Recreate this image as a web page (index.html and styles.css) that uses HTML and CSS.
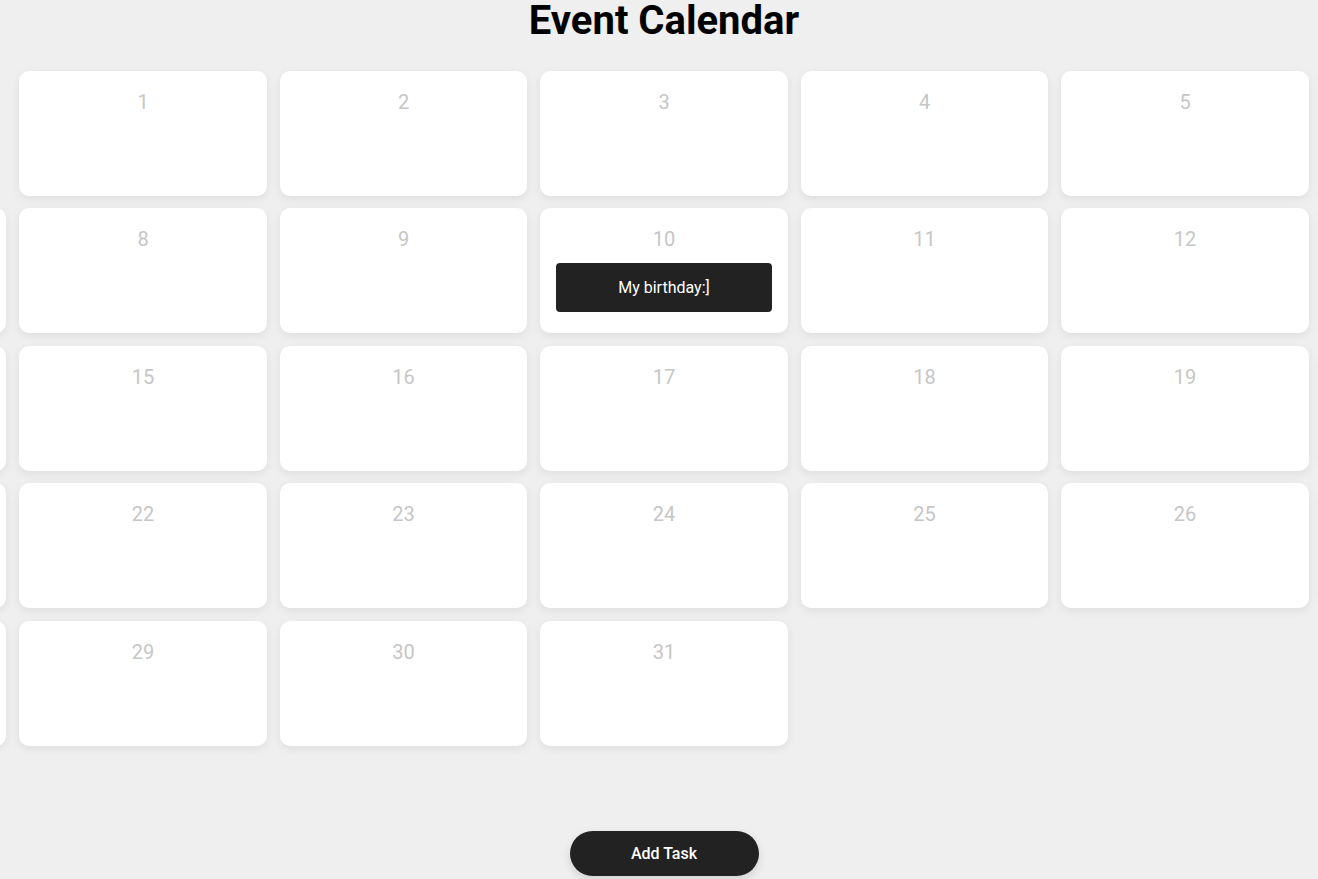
FILE: index.html
```html
<!DOCTYPE html>
<html lang="en">
<head>
<meta charset="utf-8">
<title>Event Calendar</title>
<link rel="stylesheet" href="styles.css">
</head>
<body>
<main class="page">
  <h1 class="title">Event Calendar</h1>
  <div class="calendar">
    <div class="blank"></div>
    <div class="day"><span class="num">1</span></div>
    <div class="day"><span class="num">2</span></div>
    <div class="day"><span class="num">3</span></div>
    <div class="day"><span class="num">4</span></div>
    <div class="day"><span class="num">5</span></div>
    <div class="day"><span class="num">6</span></div>
    <div class="day"><span class="num">7</span></div>
    <div class="day"><span class="num">8</span></div>
    <div class="day"><span class="num">9</span></div>
    <div class="day"><span class="num">10</span><div class="event">My birthday:]</div></div>
    <div class="day"><span class="num">11</span></div>
    <div class="day"><span class="num">12</span></div>
    <div class="day"><span class="num">13</span></div>
    <div class="day"><span class="num">14</span></div>
    <div class="day"><span class="num">15</span></div>
    <div class="day"><span class="num">16</span></div>
    <div class="day"><span class="num">17</span></div>
    <div class="day"><span class="num">18</span></div>
    <div class="day"><span class="num">19</span></div>
    <div class="day"><span class="num">20</span></div>
    <div class="day"><span class="num">21</span></div>
    <div class="day"><span class="num">22</span></div>
    <div class="day"><span class="num">23</span></div>
    <div class="day"><span class="num">24</span></div>
    <div class="day"><span class="num">25</span></div>
    <div class="day"><span class="num">26</span></div>
    <div class="day"><span class="num">27</span></div>
    <div class="day"><span class="num">28</span></div>
    <div class="day"><span class="num">29</span></div>
    <div class="day"><span class="num">30</span></div>
    <div class="day"><span class="num">31</span></div>
  </div>
  <button class="add-btn" type="button">Add Task</button>
</main>
</body>
</html>
```

FILE: styles.css
```css
html, body {
  margin: 0;
  padding: 0;
  background: #efefef;
  overflow: hidden;
}

body {
  font-family: Roboto, "Liberation Sans", Arial, sans-serif;
  width: 1318px;
  height: 879px;
}

.page {
  display: flex;
  flex-direction: column;
  align-items: center;
  padding-left: 10px;
  box-sizing: border-box;
  width: 1318px;
}

.title {
  margin: 0 0 30px;
  font-size: 40px;
  line-height: 40px;
  font-weight: 700;
  color: #000;
  padding-top: 1px;
}

.calendar {
  flex: none;
  display: grid;
  grid-template-columns: repeat(7, 247.5px);
  grid-auto-rows: 124.8px;
  column-gap: 13px;
  row-gap: 12.7px;
}

.day {
  background: #fff;
  border-radius: 10px;
  box-shadow: 0 3px 10px rgba(0, 0, 0, 0.07);
  display: flex;
  flex-direction: column;
  align-items: stretch;
  padding: 20px 16px 0;
  box-sizing: border-box;
}

.num {
  text-align: center;
  font-size: 20px;
  color: #c6c6c6;
  line-height: 23px;
}

.event {
  margin-top: 12px;
  background: #222;
  color: #fff;
  border-radius: 4px;
  text-align: center;
  font-size: 16px;
  line-height: 19px;
  padding: 15px 10px;
}

.add-btn {
  margin-top: 85px;
  background: #222;
  color: #fff;
  border: none;
  border-radius: 23px;
  font-family: Roboto, "Liberation Sans", Arial, sans-serif;
  font-size: 16px;
  font-weight: 500;
  line-height: 19px;
  padding: 13px 0;
  width: 189px;
  box-shadow: 0 4px 10px rgba(0, 0, 0, 0.12);
}
```
